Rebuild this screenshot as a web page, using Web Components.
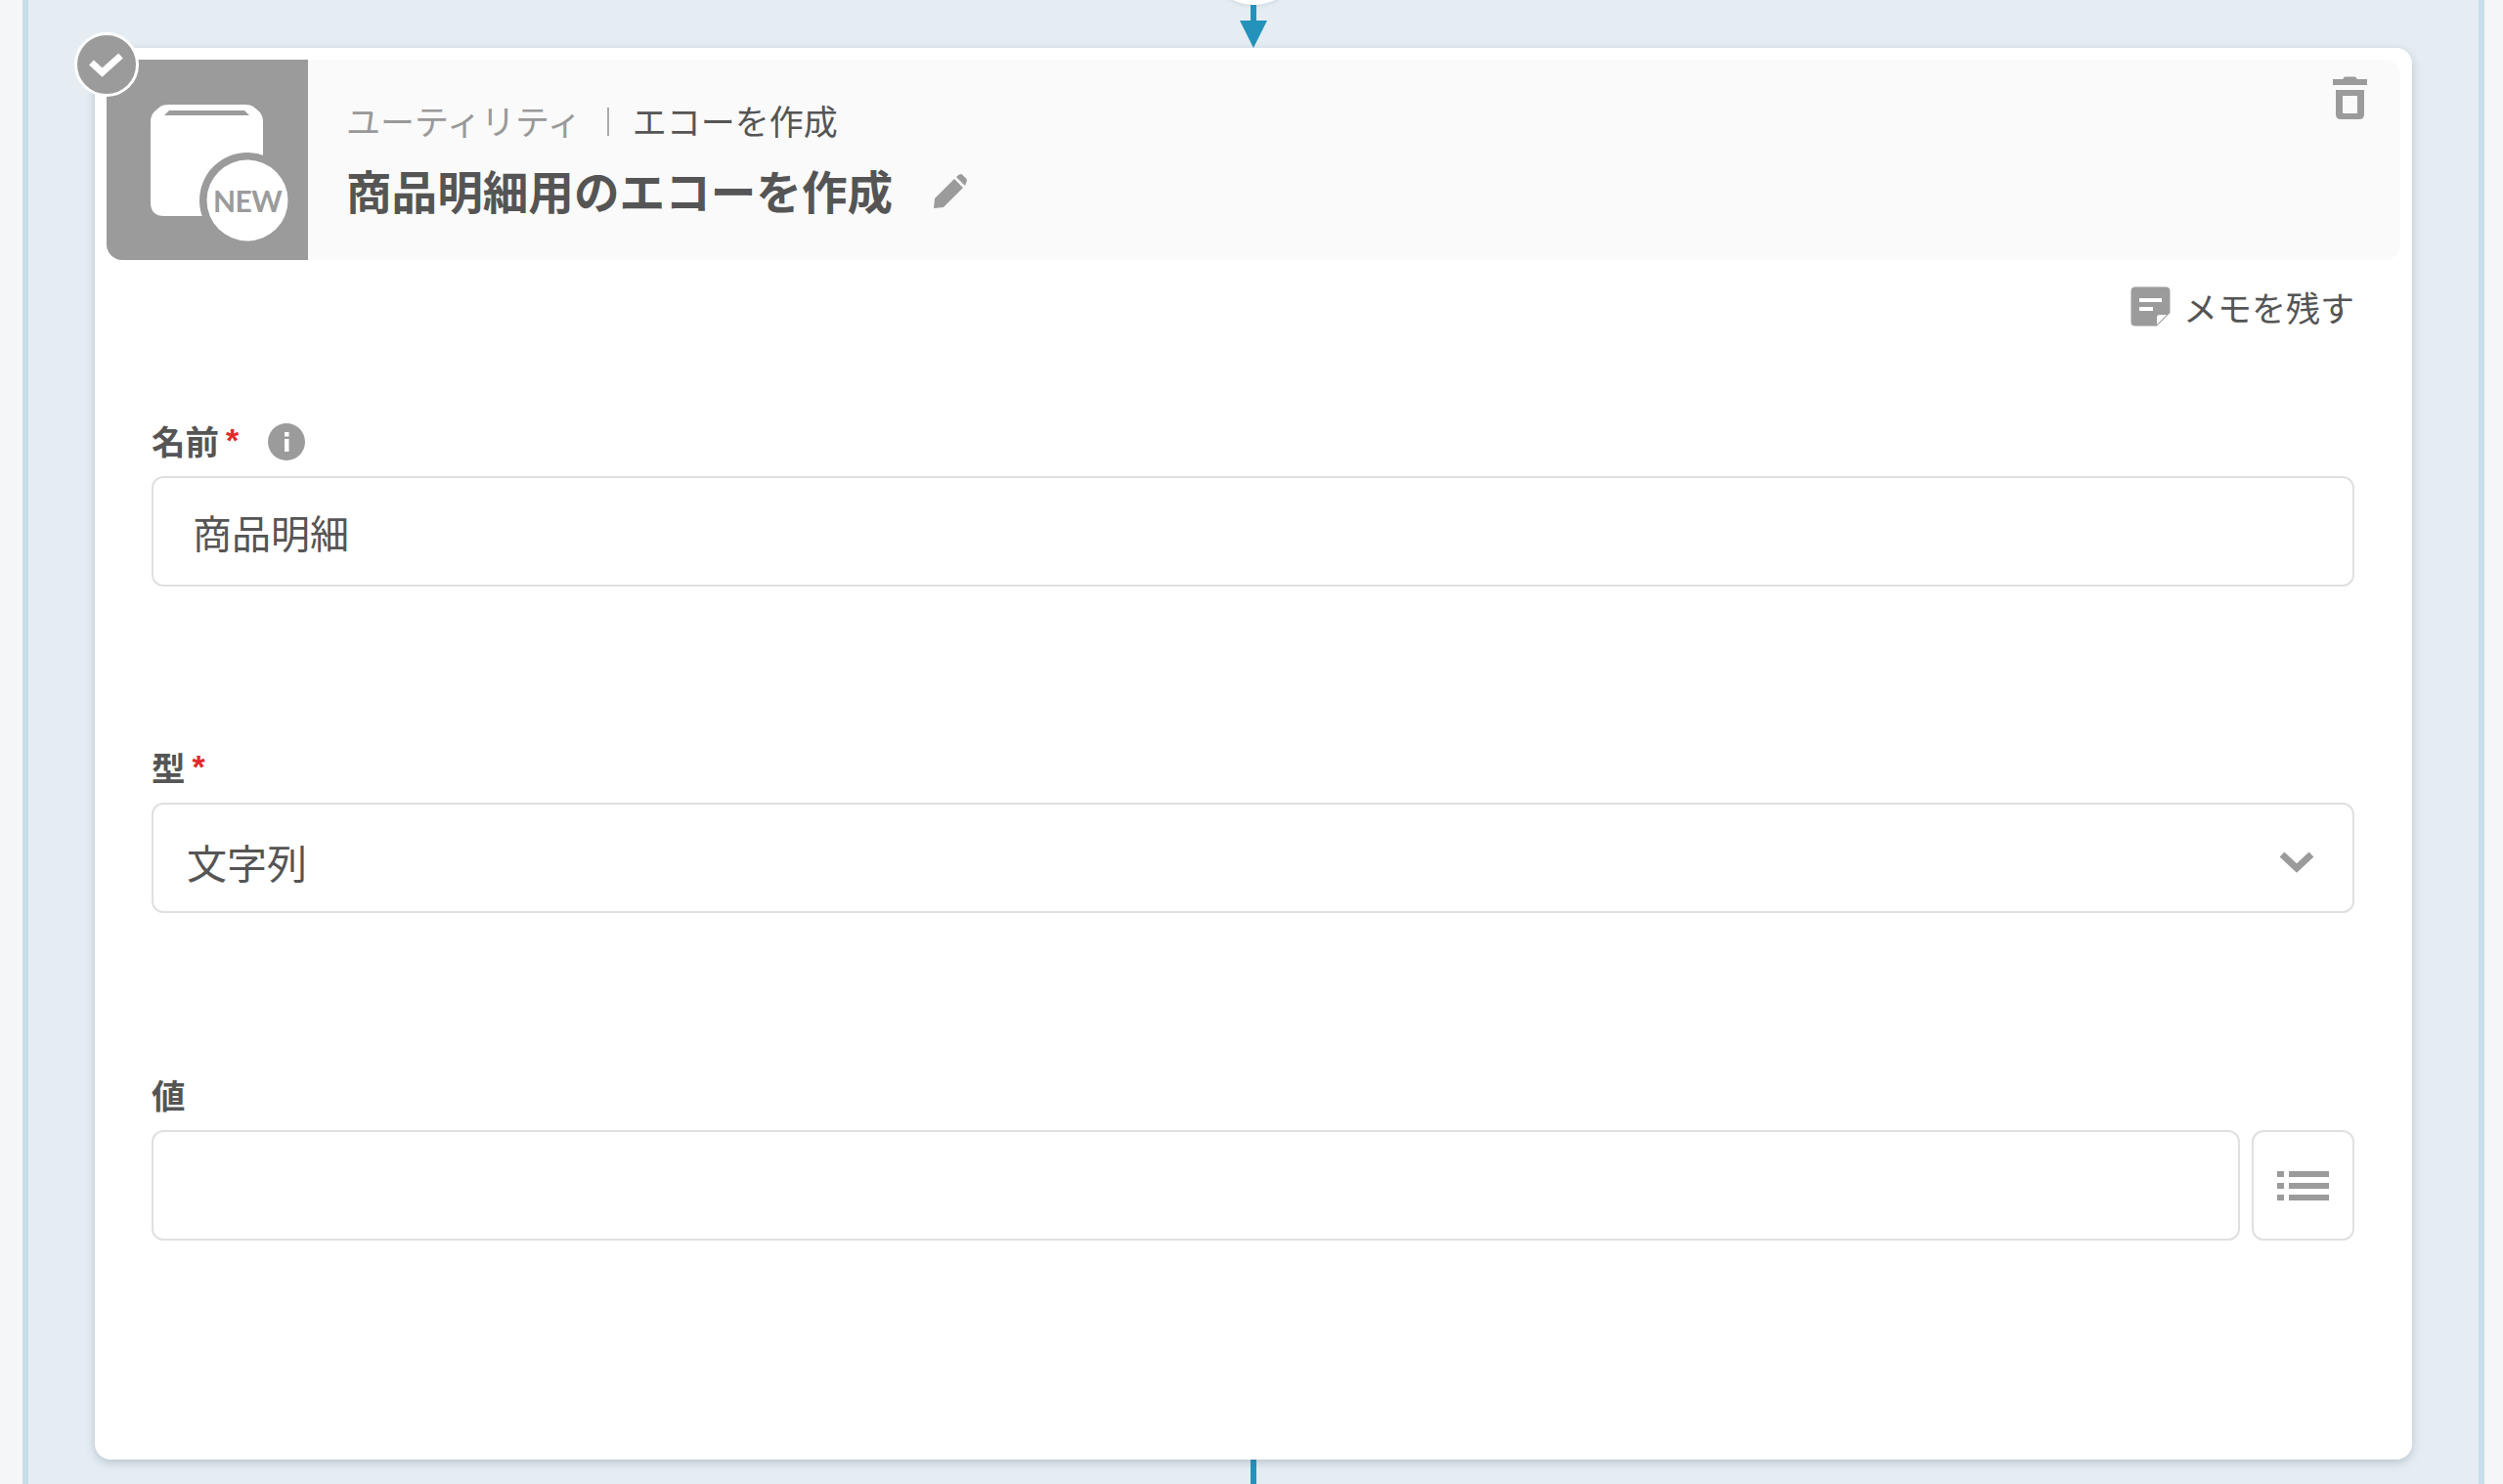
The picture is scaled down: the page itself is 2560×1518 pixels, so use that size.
<!DOCTYPE html>
<html lang="ja">
<head>
<meta charset="utf-8">
<title>商品明細用のエコーを作成</title>
<style>
  html, body { margin: 0; height: 100%; overflow: hidden; }
  body {
    background: #f5f6f8;
    color: #555;
    font-family: Lato, "Noto Sans CJK JP", sans-serif;
  }
  svg { display: block; }
</style>
</head>
<body>
<flow-canvas>
  <flow-arrow></flow-arrow>
  <flow-card>
    <card-header slot="header" category="ユーティリティ" action="エコーを作成" name="商品明細用のエコーを作成"></card-header>
    <memo-link>メモを残す</memo-link>
    <form-field label="名前" required info>
      <text-box>商品明細</text-box>
    </form-field>
    <form-field label="型" required style="margin-bottom: 168px">
      <select-box>文字列</select-box>
    </form-field>
    <form-field label="値">
      <text-box list></text-box>
    </form-field>
  </flow-card>
  <flow-tail></flow-tail>
</flow-canvas>

<script>
class FlowCanvas extends HTMLElement {
  constructor() {
    super();
    this.attachShadow({ mode: "open" });
    this.shadowRoot.innerHTML = `
      <style>
        :host {
          display: flex;
          flex-direction: column;
          align-items: stretch;
          box-sizing: border-box;
          height: 1518px;
          margin: 0 19px 0 23px;
          padding: 0 68px;
          background: #e5edf3;
          border-left: 6px solid #c6dfea;
          border-right: 6px solid #c6dfea;
          overflow: hidden;
        }
      </style>
      <slot></slot>
    `;
  }
}

class FlowArrow extends HTMLElement {
  constructor() {
    super();
    this.attachShadow({ mode: "open" });
    this.shadowRoot.innerHTML = `
      <style>
        :host {
          display: flex;
          flex-direction: column;
          align-items: center;
          position: relative;
          height: 49px;
        }
        .dot {
          position: absolute;
          top: -92px;
          width: 97px;
          height: 97px;
          border-radius: 50%;
          background: #fff;
          box-shadow: 0 1px 4px rgba(60,80,100,0.15);
        }
        .line { position: relative; width: 6px; height: 16px; margin-top: 5px; background: #2393bb; }
        .head {
          width: 0;
          height: 0;
          border-left: 14.5px solid transparent;
          border-right: 14.5px solid transparent;
          border-top: 28px solid #2393bb;
        }
      </style>
      <div class="dot"></div>
      <div class="line"></div>
      <div class="head"></div>
    `;
  }
}

class FlowTail extends HTMLElement {
  constructor() {
    super();
    this.attachShadow({ mode: "open" });
    this.shadowRoot.innerHTML = `
      <style>
        :host { display: flex; justify-content: center; flex: 1; }
        div { width: 6px; background: #2393bb; }
      </style>
      <div></div>
    `;
  }
}

class FlowCard extends HTMLElement {
  constructor() {
    super();
    this.attachShadow({ mode: "open" });
    this.shadowRoot.innerHTML = `
      <style>
        :host {
          display: block;
          position: relative;
          z-index: 1;
          height: 1444px;
          box-sizing: border-box;
          padding: 12px;
          background: #fff;
          border-radius: 16px;
          box-shadow: 0 3px 10px rgba(70,90,110,0.28);
        }
        .check {
          position: absolute;
          left: -21px;
          top: -16px;
          width: 60px;
          height: 60px;
          border: 3px solid #fff;
          border-radius: 50%;
          background: #9b9b9b;
          display: flex;
          align-items: center;
          justify-content: center;
          z-index: 2;
        }
        .body { padding: 0 47px 0 46px; }
      </style>
      <div class="check">
        <svg width="36" height="26" viewBox="0 0 36 26"><path d="M2.5 11 L13.5 21 L32.5 4" fill="none" stroke="#fff" stroke-width="7"/></svg>
      </div>
      <slot name="header"></slot>
      <div class="body"><slot></slot></div>
    `;
  }
}

class CardHeader extends HTMLElement {
  constructor() {
    super();
    this.attachShadow({ mode: "open" });
  }

  connectedCallback() {
    this.shadowRoot.innerHTML = `
      <style>
        :host {
          display: flex;
          height: 205px;
          background: #fafafa;
          border-radius: 16px;
          position: relative;
        }
        .icon {
          position: relative;
          width: 206px;
          flex: none;
          background: #9b9b9b;
          border-radius: 16px 0 0 16px;
        }
        .icon svg { position: absolute; left: 0; top: 0; }
        .new {
          position: absolute;
          left: 109px;
          top: 125px;
          width: 70px;
          text-align: center;
          font-size: 30px;
          line-height: 38px;
          font-weight: 700;
          letter-spacing: -0.5px;
          color: #9b9b9b;
        }
        .text { padding: 46px 0 0 39px; }
        .crumb {
          display: flex;
          align-items: center;
          height: 35px;
          font-size: 35px;
          line-height: 35px;
        }
        .cat { color: #999; }
        .sep { width: 2px; height: 29px; margin: 0 24px 0 26px; background: #aaa; }
        .title {
          display: flex;
          align-items: center;
          margin-top: 29px;
          font-size: 46.6px;
          line-height: 50px;
          font-weight: 700;
        }
        .title svg { margin-left: 41px; }
        .trash { position: absolute; right: 34px; top: 17px; }
      </style>
      <div class="icon">
        <svg width="206" height="205" viewBox="0 0 206 205">
          <path d="M45 64 Q45 57 49 53 L55 48 Q57 46 64 46 L141 46 Q148 46 150 48 L156 53 Q160 57 160 64 L160 160 L59 160 Q45 160 45 146 Z" fill="#fff"/>
          <path d="M59 57 L146 57 L141 52 Q140 52 137 52 L68 52 Q65 52 64 52 Z" fill="#9b9b9b"/>
          <circle cx="144" cy="144" r="49" fill="#9b9b9b"/>
          <circle cx="144" cy="144" r="41.5" fill="#fff"/>
        </svg>
        <span class="new">NEW</span>
      </div>
      <div class="text">
        <div class="crumb">
          <span class="cat">${this.getAttribute("category")}</span>
          <span class="sep"></span>
          <span>${this.getAttribute("action")}</span>
        </div>
        <div class="title">
          <span>${this.getAttribute("name")}</span>
          <svg width="36" height="36" viewBox="0 0 36 36"><path d="M1 35 L2 25 L22 5 L31 14 L11 34 Z M24 3 L27 0.5 Q28.5 -0.5 30 0.5 L34.5 5 Q35.5 6.5 34.5 8 L33 12 Z" fill="#9b9b9b"/></svg>
        </div>
      </div>
      <svg class="trash" width="35" height="45" viewBox="0 0 35 45">
        <path d="M0 3 H10 L12 0.5 H23 L25 3 H35 V9 H0 Z" fill="#9b9b9b"/>
        <path d="M3 14 H32 V39 Q32 44 27 44 H8 Q3 44 3 39 Z M10 20 V38 H25 V20 Z" fill="#9b9b9b" fill-rule="evenodd"/>
      </svg>
    `;
  }
}

class MemoLink extends HTMLElement {
  constructor() {
    super();
    this.attachShadow({ mode: "open" });
    this.shadowRoot.innerHTML = `
      <style>
        :host {
          display: flex;
          align-items: center;
          justify-content: flex-end;
          gap: 13px;
          height: 41px;
          margin: 27px 0 99px;
          font-size: 35px;
          line-height: 41px;
        }
        span { padding-top: 3px; }
      </style>
      <svg width="41" height="41" viewBox="0 0 41 41">
        <path d="M5 0.5 H36 Q40.5 0.5 40.5 5 V27 L27 40.5 H5 Q0.5 40.5 0.5 36 V5 Q0.5 0.5 5 0.5 Z" fill="#9b9b9b"/>
        <path d="M9 12 H32 V16 H9 Z M9 21 H23 V25 H9 Z" fill="#fff"/>
        <path d="M37 29 L27 39 V32 Q27 29 30 29 Z" fill="#fff"/>
      </svg>
      <span><slot></slot></span>
    `;
  }
}

class FormField extends HTMLElement {
  constructor() {
    super();
    this.attachShadow({ mode: "open" });
  }

  connectedCallback() {
    const mark = this.hasAttribute("required") ? `<span class="req">*</span>` : "";
    const info = this.hasAttribute("info")
      ? `<svg class="info" width="38" height="38" viewBox="0 0 38 38">
           <circle cx="19" cy="19" r="19" fill="#9b9b9b"/>
           <rect x="17" y="9" width="4.5" height="4.5" fill="#fff"/>
           <rect x="17" y="16" width="4.5" height="13" fill="#fff"/>
         </svg>`
      : "";
    this.shadowRoot.innerHTML = `
      <style>
        :host { display: block; margin-bottom: 167px; }
        .label {
          display: flex;
          align-items: center;
          height: 38px;
          margin-bottom: 16px;
          font-size: 34.5px;
          line-height: 38px;
          font-weight: 700;
        }
        .req {
          align-self: flex-start;
          margin-left: 7px;
          color: #e02b2b;
          font-family: "Liberation Sans", sans-serif;
          font-size: 34px;
          line-height: 34px;
        }
        .info { margin-left: 30px; }
      </style>
      <div class="label"><span>${this.getAttribute("label")}</span>${mark}${info}</div>
      <slot></slot>
    `;
  }
}

class TextBox extends HTMLElement {
  constructor() {
    super();
    this.attachShadow({ mode: "open" });
  }

  connectedCallback() {
    const listBtn = this.hasAttribute("list")
      ? `<div class="btn">
           <svg width="53" height="30" viewBox="0 0 53 30" fill="#9b9b9b">
             <path d="M0 0 H7 V6 H0 Z M12 0 H53 V6 H12 Z M0 12 H7 V18 H0 Z M12 12 H53 V18 H12 Z M0 24 H7 V30 H0 Z M12 24 H53 V30 H12 Z"/>
           </svg>
         </div>`
      : "";
    this.shadowRoot.innerHTML = `
      <style>
        :host { display: flex; gap: 12px; }
        .box, .btn {
          box-sizing: border-box;
          height: 113px;
          background: #fff;
          border: 2px solid #e0e0e0;
          border-radius: 12px;
        }
        .box {
          flex: 1;
          display: flex;
          align-items: center;
          padding: 0 40px;
          font-size: 40px;
        }
        .btn {
          width: 105px;
          flex: none;
          display: flex;
          align-items: center;
          justify-content: center;
        }
      </style>
      <div class="box"><slot></slot></div>
      ${listBtn}
    `;
  }
}

class SelectBox extends HTMLElement {
  constructor() {
    super();
    this.attachShadow({ mode: "open" });
    this.shadowRoot.innerHTML = `
      <style>
        :host {
          display: flex;
          align-items: center;
          justify-content: space-between;
          box-sizing: border-box;
          height: 113px;
          padding: 0 39px 0 34px;
          background: #fff;
          border: 2px solid #e0e0e0;
          border-radius: 12px;
          font-size: 41px;
        }
        span { padding-top: 6px; }
        svg { margin-top: 8px; }
      </style>
      <span><slot></slot></span>
      <svg width="36" height="24" viewBox="0 0 36 24"><path d="M3 4 L18 18 L33 4" fill="none" stroke="#9b9b9b" stroke-width="7"/></svg>
    `;
  }
}

customElements.define("flow-canvas", FlowCanvas);
customElements.define("flow-arrow", FlowArrow);
customElements.define("flow-tail", FlowTail);
customElements.define("flow-card", FlowCard);
customElements.define("card-header", CardHeader);
customElements.define("memo-link", MemoLink);
customElements.define("form-field", FormField);
customElements.define("text-box", TextBox);
customElements.define("select-box", SelectBox);
</script>
</body>
</html>
